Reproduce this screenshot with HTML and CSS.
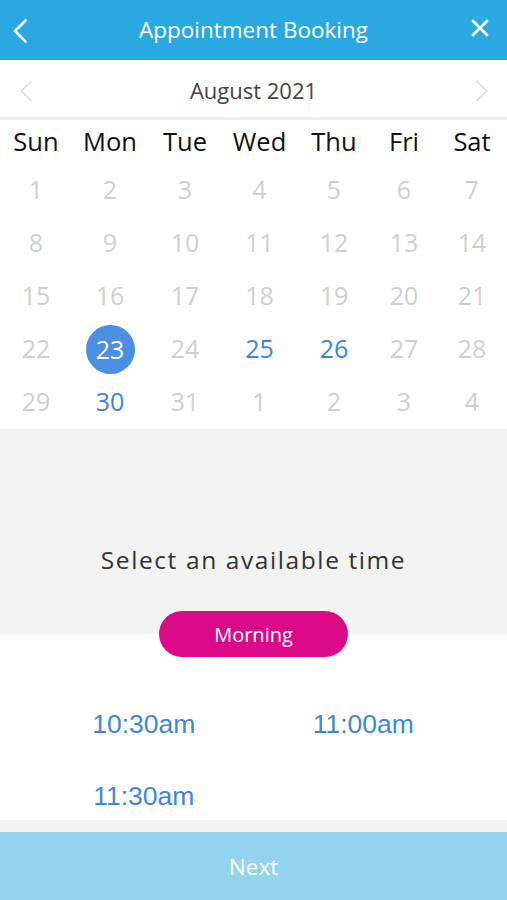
FILE: index.html
```html
<!DOCTYPE html>
<html lang="en">
<head>
<meta charset="utf-8">
<title>Appointment Booking</title>
<link rel="stylesheet" href="styles.css">
</head>
<body>
<div class="app">
  <header class="topbar">
    <span class="icon-back">
      <svg width="14" height="24" viewBox="0 0 14 24"><polyline points="12.5,1.5 2,12 12.5,22.5" fill="none" stroke="#fff" stroke-width="2.6" stroke-linecap="round" stroke-linejoin="round"/></svg>
    </span>
    <h1 class="title">Appointment Booking</h1>
    <span class="icon-close">
      <svg width="18" height="18" viewBox="0 0 18 18"><path d="M2 2 L16 16 M16 2 L2 16" fill="none" stroke="#fff" stroke-width="2.8" stroke-linecap="round"/></svg>
    </span>
  </header>

  <div class="monthbar">
    <span class="month-prev">
      <svg width="13" height="22" viewBox="0 0 13 22"><polyline points="11.5,1 1.5,11 11.5,21" fill="none" stroke="#dcdcdc" stroke-width="1.6"/></svg>
    </span>
    <div class="month-label">August 2021</div>
    <span class="month-next">
      <svg width="13" height="22" viewBox="0 0 13 22"><polyline points="1.5,1 11.5,11 1.5,21" fill="none" stroke="#dcdcdc" stroke-width="1.6"/></svg>
    </span>
  </div>

  <div class="calendar">
    <div class="weekdays">
      <span>Sun</span><span>Mon</span><span>Tue</span><span>Wed</span><span>Thu</span><span>Fri</span><span>Sat</span>
    </div>
    <div class="days">
      <span class="day">1</span><span class="day">2</span><span class="day">3</span><span class="day">4</span><span class="day">5</span><span class="day">6</span><span class="day">7</span>
      <span class="day">8</span><span class="day">9</span><span class="day">10</span><span class="day">11</span><span class="day">12</span><span class="day">13</span><span class="day">14</span>
      <span class="day">15</span><span class="day">16</span><span class="day">17</span><span class="day">18</span><span class="day">19</span><span class="day">20</span><span class="day">21</span>
      <span class="day">22</span><span class="day"><span class="selected">23</span></span><span class="day">24</span><span class="day available">25</span><span class="day available">26</span><span class="day">27</span><span class="day">28</span>
      <span class="day">29</span><span class="day available">30</span><span class="day">31</span><span class="day">1</span><span class="day">2</span><span class="day">3</span><span class="day">4</span>
    </div>
  </div>

  <section class="times">
    <h2 class="times-heading">Select an available time</h2>
    <div class="pill">Morning</div>
    <div class="slots">
      <span class="slot">10:30am</span>
      <span class="slot">11:00am</span>
      <span class="slot">11:30am</span>
    </div>
  </section>

  <div class="spacer"></div>
  <button class="next">Next</button>
</div>
</body>
</html>
```

FILE: styles.css
```css
* { box-sizing: border-box; }
html, body { margin: 0; padding: 0; }
body {
  font-family: "Open Sans", "Noto Sans", sans-serif;
  background: #fff;
  width: 507px;
  height: 900px;
  overflow: hidden;
}
.app {
  display: flex;
  flex-direction: column;
  height: 900px;
}
.topbar {
  height: 60px;
  background: #29a9df;
  display: grid;
  grid-template-columns: 60px 1fr 60px;
  align-items: center;
}
.icon-back { justify-self: start; padding-left: 13px; display: flex; padding-top: 1px; }
.icon-close { justify-self: end; padding-right: 18px; display: flex; padding-bottom: 5px; }
.title {
  margin: 0;
  text-align: center;
  color: #fff;
  font-weight: 400;
  font-size: 22.5px;
  line-height: 1;
}
.monthbar {
  height: 60px;
  border-bottom: 3px solid #ededed;
  display: grid;
  grid-template-columns: 60px 1fr 60px;
  align-items: center;
}
.month-prev { justify-self: start; padding-left: 20px; display: flex; padding-top: 4px; }
.month-next { justify-self: end; padding-right: 19px; display: flex; padding-top: 4px; }
.month-label {
  text-align: center;
  font-size: 22px;
  color: #444;
  line-height: 1;
  padding-top: 2px;
}
.weekdays, .days {
  display: grid;
  grid-template-columns: 72fr 76fr 74fr 75fr 74fr 66fr 70fr;
  text-align: center;
}
.weekdays {
  height: 44px;
  align-items: center;
  font-size: 25.5px;
  color: #111;
}
.weekdays span { line-height: 1; padding-bottom: 0; }
.days { grid-auto-rows: 53px; }
.day {
  display: flex;
  align-items: center;
  justify-content: center;
  font-size: 25px;
  color: #cfcfcf;
  line-height: 1;
  padding-bottom: 2px;
}
.day.available { color: #3c86d8; }
.selected {
  width: 49px;
  height: 49px;
  border-radius: 50%;
  background: #4a8fe1;
  color: #fff;
  display: flex;
  align-items: center;
  justify-content: center;
  margin-top: 2px;
}
.times {
  background: linear-gradient(#f2f2f2 0, #f2f2f2 205px, #fff 205px);
  display: flex;
  flex-direction: column;
  align-items: center;
  padding-top: 117px;
}
.times-heading {
  margin: 0;
  font-weight: 400;
  font-size: 24.5px;
  letter-spacing: 1.6px;
  color: #333;
  line-height: 28px;
}
.pill {
  margin-top: 37px;
  width: 189px;
  height: 46px;
  border-radius: 23px;
  background: #db0a89;
  color: #fff;
  font-size: 20px;
  display: flex;
  align-items: center;
  justify-content: center;
}
.slots {
  align-self: stretch;
  height: 163px;
  overflow: hidden;
  padding: 31px 34px 0;
  display: grid;
  grid-template-columns: 1fr 1fr;
  grid-auto-rows: 72px;
  align-content: start;
}
.slot {
  font-family: "Liberation Sans", Arial, sans-serif;
  font-size: 26.5px;
  color: #3f86d6;
  text-align: center;
  display: flex;
  align-items: center;
  justify-content: center;
}
.spacer {
  height: 12px;
  background: #f0f0f0;
}
.next {
  flex: 1;
  border: 0;
  margin: 0;
  background: #93d3ee;
  color: #fff;
  font-family: "Open Sans", "Noto Sans", sans-serif;
  font-size: 22.5px;
  padding: 0;
}
```
